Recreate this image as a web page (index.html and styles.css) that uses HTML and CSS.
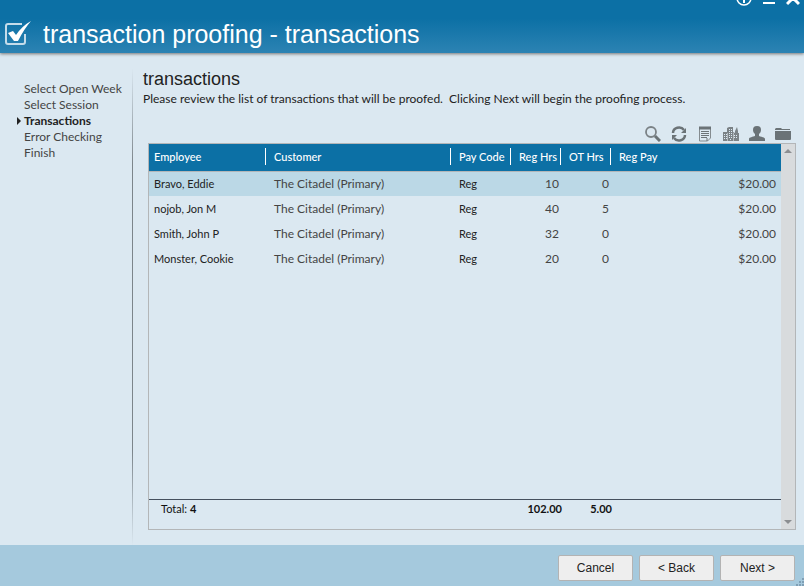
FILE: index.html
```html
<!DOCTYPE html>
<html lang="en">
<head>
  <meta charset="UTF-8" />
  <title>transaction proofing - transactions</title>
  <link rel="stylesheet" href="styles.css">
</head>
<body>

<header class="titlebar">
  <svg class="logo" width="27" height="25" viewBox="0 0 27 25">
    <path d="M18 3H4Q2 3 2 5V21Q2 23 4 23H19Q21 23 21 21V13" fill="none" stroke="#c4dcea" stroke-width="2"/>
    <path d="M4 12l5-2 3 4Q18 5 27 0Q20 8 14 20H10Z" fill="#fff"/>
  </svg>
  <h1>transaction proofing - transactions</h1>
  <div class="window-controls">
    <button aria-label="Info">
      <svg width="16" height="7" viewBox="0 0 16 7"><circle cx="8" cy="-2" r="7" fill="none" stroke="#fff" stroke-width="1.500"/><path d="M8 0v3" stroke="#fff" stroke-width="2"/></svg>
    </button>
    <button aria-label="Minimize">
      <svg width="12" height="7" viewBox="0 0 12 7"><path d="M0 3h12" stroke="#fff" stroke-width="2"/></svg>
    </button>
    <button aria-label="Close">
      <svg width="14" height="7" viewBox="0 0 14 7"><path d="M1 4L7-2l6 6" fill="none" stroke="#fff" stroke-width="3"/></svg>
    </button>
  </div>
</header>

<div class="content">
  <nav class="steps">
    <ol>
      <li>Select Open Week</li>
      <li>Select Session</li>
      <li class="current">Transactions</li>
      <li>Error Checking</li>
      <li>Finish</li>
    </ol>
  </nav>

  <main class="page">
    <h2>transactions</h2>
    <p>Please review the list of transactions that will be proofed.&nbsp; Clicking Next will begin the proofing process.</p>

    <div class="toolbar">
      <button aria-label="Search">
        <svg width="16" height="16" viewBox="0 0 16 16"><circle cx="6" cy="6" r="5" fill="none" stroke="#7b8286" stroke-width="1.800"/><path d="M10 10l5 5" stroke="#6b7377" stroke-width="3"/></svg>
      </button>
      <button aria-label="Refresh">
        <svg width="16" height="16" viewBox="0 0 16 16"><path d="M2 7a6 5.500 0 0 1 11-3M14 9a6 5.500 0 0 1-11 3" fill="none" stroke="#6b7377" stroke-width="2.500"/><path d="M15 2v5h-5zM1 14V9h5z" fill="#6b7377"/></svg>
      </button>
      <button aria-label="Report">
        <svg width="16" height="16" viewBox="0 0 16 16"><path d="M2.500 1v14h8l3-3V1" fill="none" stroke="#858c90"/><path d="M2 2h12" stroke="#6b7377" stroke-width="3"/><path d="M4 5.500h8M4 7.500h8M4 9.500h8M4 11.500h6M10 12v3" stroke="#6b7377"/></svg>
      </button>
      <button aria-label="Companies">
        <svg width="16" height="16" viewBox="0 0 16 16"><path d="M0 15V6h4V2l2-1h4v5l2 1V5l2-4 1 4v2h1v8z" fill="#7b8286"/><path d="M1 8.500h3M1 10.500h3M1 12.500h3M6 3.500h3M6 5.500h3M6 7.500h3M6 9.500h3M6 11.500h3M11 9.500h4M11 11.500h4M7 13.500h2" stroke="#dce9f2" stroke-dasharray="1 1"/><path d="M4.500 7v8M10.500 7v8" stroke="#b3babf"/></svg>
      </button>
      <button aria-label="Person">
        <svg width="16" height="16" viewBox="0 0 16 16"><path d="M8 0c3 0 4 1.500 4 4 0 2-1 3-2 4v2c2 1 6 1 6 3v2H0v-2c0-2 4-2 6-3V8C5 7 4 6 4 4c0-2.500 1-4 4-4z" fill="#6b7377"/></svg>
      </button>
      <button aria-label="Folder">
        <svg width="16" height="16" viewBox="0 0 16 16"><path d="M0 3l1-1h5l1 1h8v1H0zM0 5h16v8q0 1-1 1H1q-1 0-1-1z" fill="#6b7377"/></svg>
      </button>
    </div>

    <div class="grid-box">
      <div class="grid-body">
        <table>
          <colgroup>
            <col class="col-employee">
            <col class="col-customer">
            <col class="col-code">
            <col class="col-hours">
            <col class="col-hours">
            <col>
          </colgroup>
          <thead>
            <tr><th>Employee</th><th>Customer</th><th>Pay Code</th><th>Reg Hrs</th><th>OT Hrs</th><th>Reg Pay</th></tr>
          </thead>
          <tbody>
            <tr class="selected"><td>Bravo, Eddie</td><td class="wide">The Citadel (Primary)</td><td>Reg</td><td class="num">10</td><td class="num">0</td><td class="num">$20.00</td></tr>
            <tr><td>nojob, Jon M</td><td class="wide">The Citadel (Primary)</td><td>Reg</td><td class="num">40</td><td class="num">5</td><td class="num">$20.00</td></tr>
            <tr><td>Smith, John P</td><td class="wide">The Citadel (Primary)</td><td>Reg</td><td class="num">32</td><td class="num">0</td><td class="num">$20.00</td></tr>
            <tr><td>Monster, Cookie</td><td class="wide">The Citadel (Primary)</td><td>Reg</td><td class="num">20</td><td class="num">0</td><td class="num">$20.00</td></tr>
          </tbody>
        </table>
        <div class="totals">
          <span class="count">Total: <b>4</b></span>
          <b>102.00</b>
          <b>5.00</b>
        </div>
      </div>
      <div class="scrollbar">
        <button class="arrow up" aria-label="Scroll up"></button>
        <button class="arrow down" aria-label="Scroll down"></button>
      </div>
    </div>
  </main>
</div>

<footer class="actions">
  <button>Cancel</button>
  <button>&lt; Back</button>
  <button>Next &gt;</button>
  <svg class="grip" width="8" height="8" viewBox="0 0 8 8"><path d="M6 0h2v2H6zM3 3h2v2H3zM6 3h2v2H6zM0 6h2v2H0zM3 6h2v2H3zM6 6h2v2H6z" fill="#7f9fb5"/></svg>
</footer>

</body>
</html>
```
FILE: styles.css
```css
* {
  box-sizing: border-box;
}

body {
  margin: 0;
  min-height: 100vh;
  display: flex;
  flex-direction: column;
  background: #dbe8f1;
  color: #222;
  font-family: Lato, sans-serif;
  font-size: 12px;
}

h1, h2, p, ol {
  margin: 0;
  padding: 0;
  font-weight: normal;
}

button {
  padding: 0;
  border: none;
  background: none;
}

svg {
  display: block;
}

.titlebar {
  display: flex;
  height: 53px;
  padding: 0 4px;
  background: linear-gradient(#0c70a5 35%, #2c83b3);
  box-shadow: 0 1px 3px #777;
  color: #fff;
  z-index: 1;
}

.logo {
  margin-top: 21px;
}

.titlebar h1 {
  flex: 1;
  padding: 20px 0 0 12px;
  font: 25px/28px "Liberation Sans", sans-serif;
}

.window-controls {
  display: flex;
  align-items: flex-start;
  gap: 11px;
}

.content {
  flex: 1;
  display: flex;
}

.steps {
  width: 133px;
  margin-top: 16px;
  padding: 12px 0 0 24px;
  border: solid;
  border-width: 0 1px 0 0;
  border-image: linear-gradient(#dbe8f1, #7c858b 20%, #7c858b 80%, #dbe8f1) 1;
  line-height: 16px;
  color: #444;
}

.steps ol {
  list-style: none;
}

.current {
  position: relative;
  font-weight: bold;
  color: #222;
}

.current::before {
  content: "";
  position: absolute;
  left: -7px;
  top: 4px;
  border: 4px solid transparent;
  border-left-color: #222;
  border-right: none;
}

.page {
  flex: 1;
  display: flex;
  flex-direction: column;
  padding: 15px 8px 15px 10px;
}

.page h2 {
  font: 18px/22px "Liberation Sans", sans-serif;
}

.page p {
  line-height: 18px;
}

.toolbar {
  display: flex;
  justify-content: flex-end;
  gap: 10px;
  margin-top: 18px;
  padding-right: 5px;
}

.grid-box {
  flex: 1;
  display: flex;
  margin: 1px 0 0 5px;
  border: 1px solid #b3b6b8;
}

.grid-body {
  flex: 1;
  display: flex;
  flex-direction: column;
}

table {
  width: 100%;
  table-layout: fixed;
  border-collapse: collapse;
  font-size: 11px;
}

.col-employee {
  width: 120px;
}

.col-customer {
  width: 185px;
}

.col-code {
  width: 60px;
}

.col-hours {
  width: 50px;
}

th {
  position: relative;
  height: 27px;
  padding: 0 0 1px 5px;
  background: #0c70a5;
  border-bottom: 1px solid #b3b6b8;
  color: #fff;
  font-weight: 500;
  text-align: left;
  white-space: nowrap;
}

/* column separators */
th + th::before {
  content: "";
  position: absolute;
  left: -4px;
  top: 4px;
  height: 17px;
  border-left: 1px solid #fff;
}

td {
  height: 25px;
  padding: 0 5px 1px;
  white-space: nowrap;
}

.wide, .num {
  padding-bottom: 0;
  font-size: 12px;
  color: #444;
}

.num {
  text-align: right;
}

.selected {
  background: #bbd8e6;
}

.totals {
  display: grid;
  grid-template-columns: 365px 48px 50px;
  height: 30px;
  margin-top: auto;
  border-top: 1px solid #45505e;
  font-size: 11px;
  line-height: 18px;
  text-align: right;
  color: #111;
}

.count {
  padding-left: 12px;
  text-align: left;
}

.scrollbar {
  width: 14px;
  display: flex;
  flex-direction: column;
  justify-content: space-between;
  align-items: center;
  padding: 5px 0;
  background: #d8dbdd;
}

.arrow {
  border: 4px solid transparent;
}

.up {
  border-top: none;
  border-bottom-color: #8b8e91;
}

.down {
  border-bottom: none;
  border-top-color: #8b8e91;
}

.actions {
  position: relative;
  display: flex;
  justify-content: flex-end;
  gap: 6px;
  height: 41px;
  padding: 10px 9px 5px;
  background: #a5c9dd;
}

.actions button {
  width: 75px;
  border: 1px solid #b3b3b3;
  border-radius: 2px;
  background: #eee;
  color: #222;
  font: 12px "Liberation Sans", sans-serif;
}

.grip {
  position: absolute;
  right: 0;
  bottom: 0;
}
```
